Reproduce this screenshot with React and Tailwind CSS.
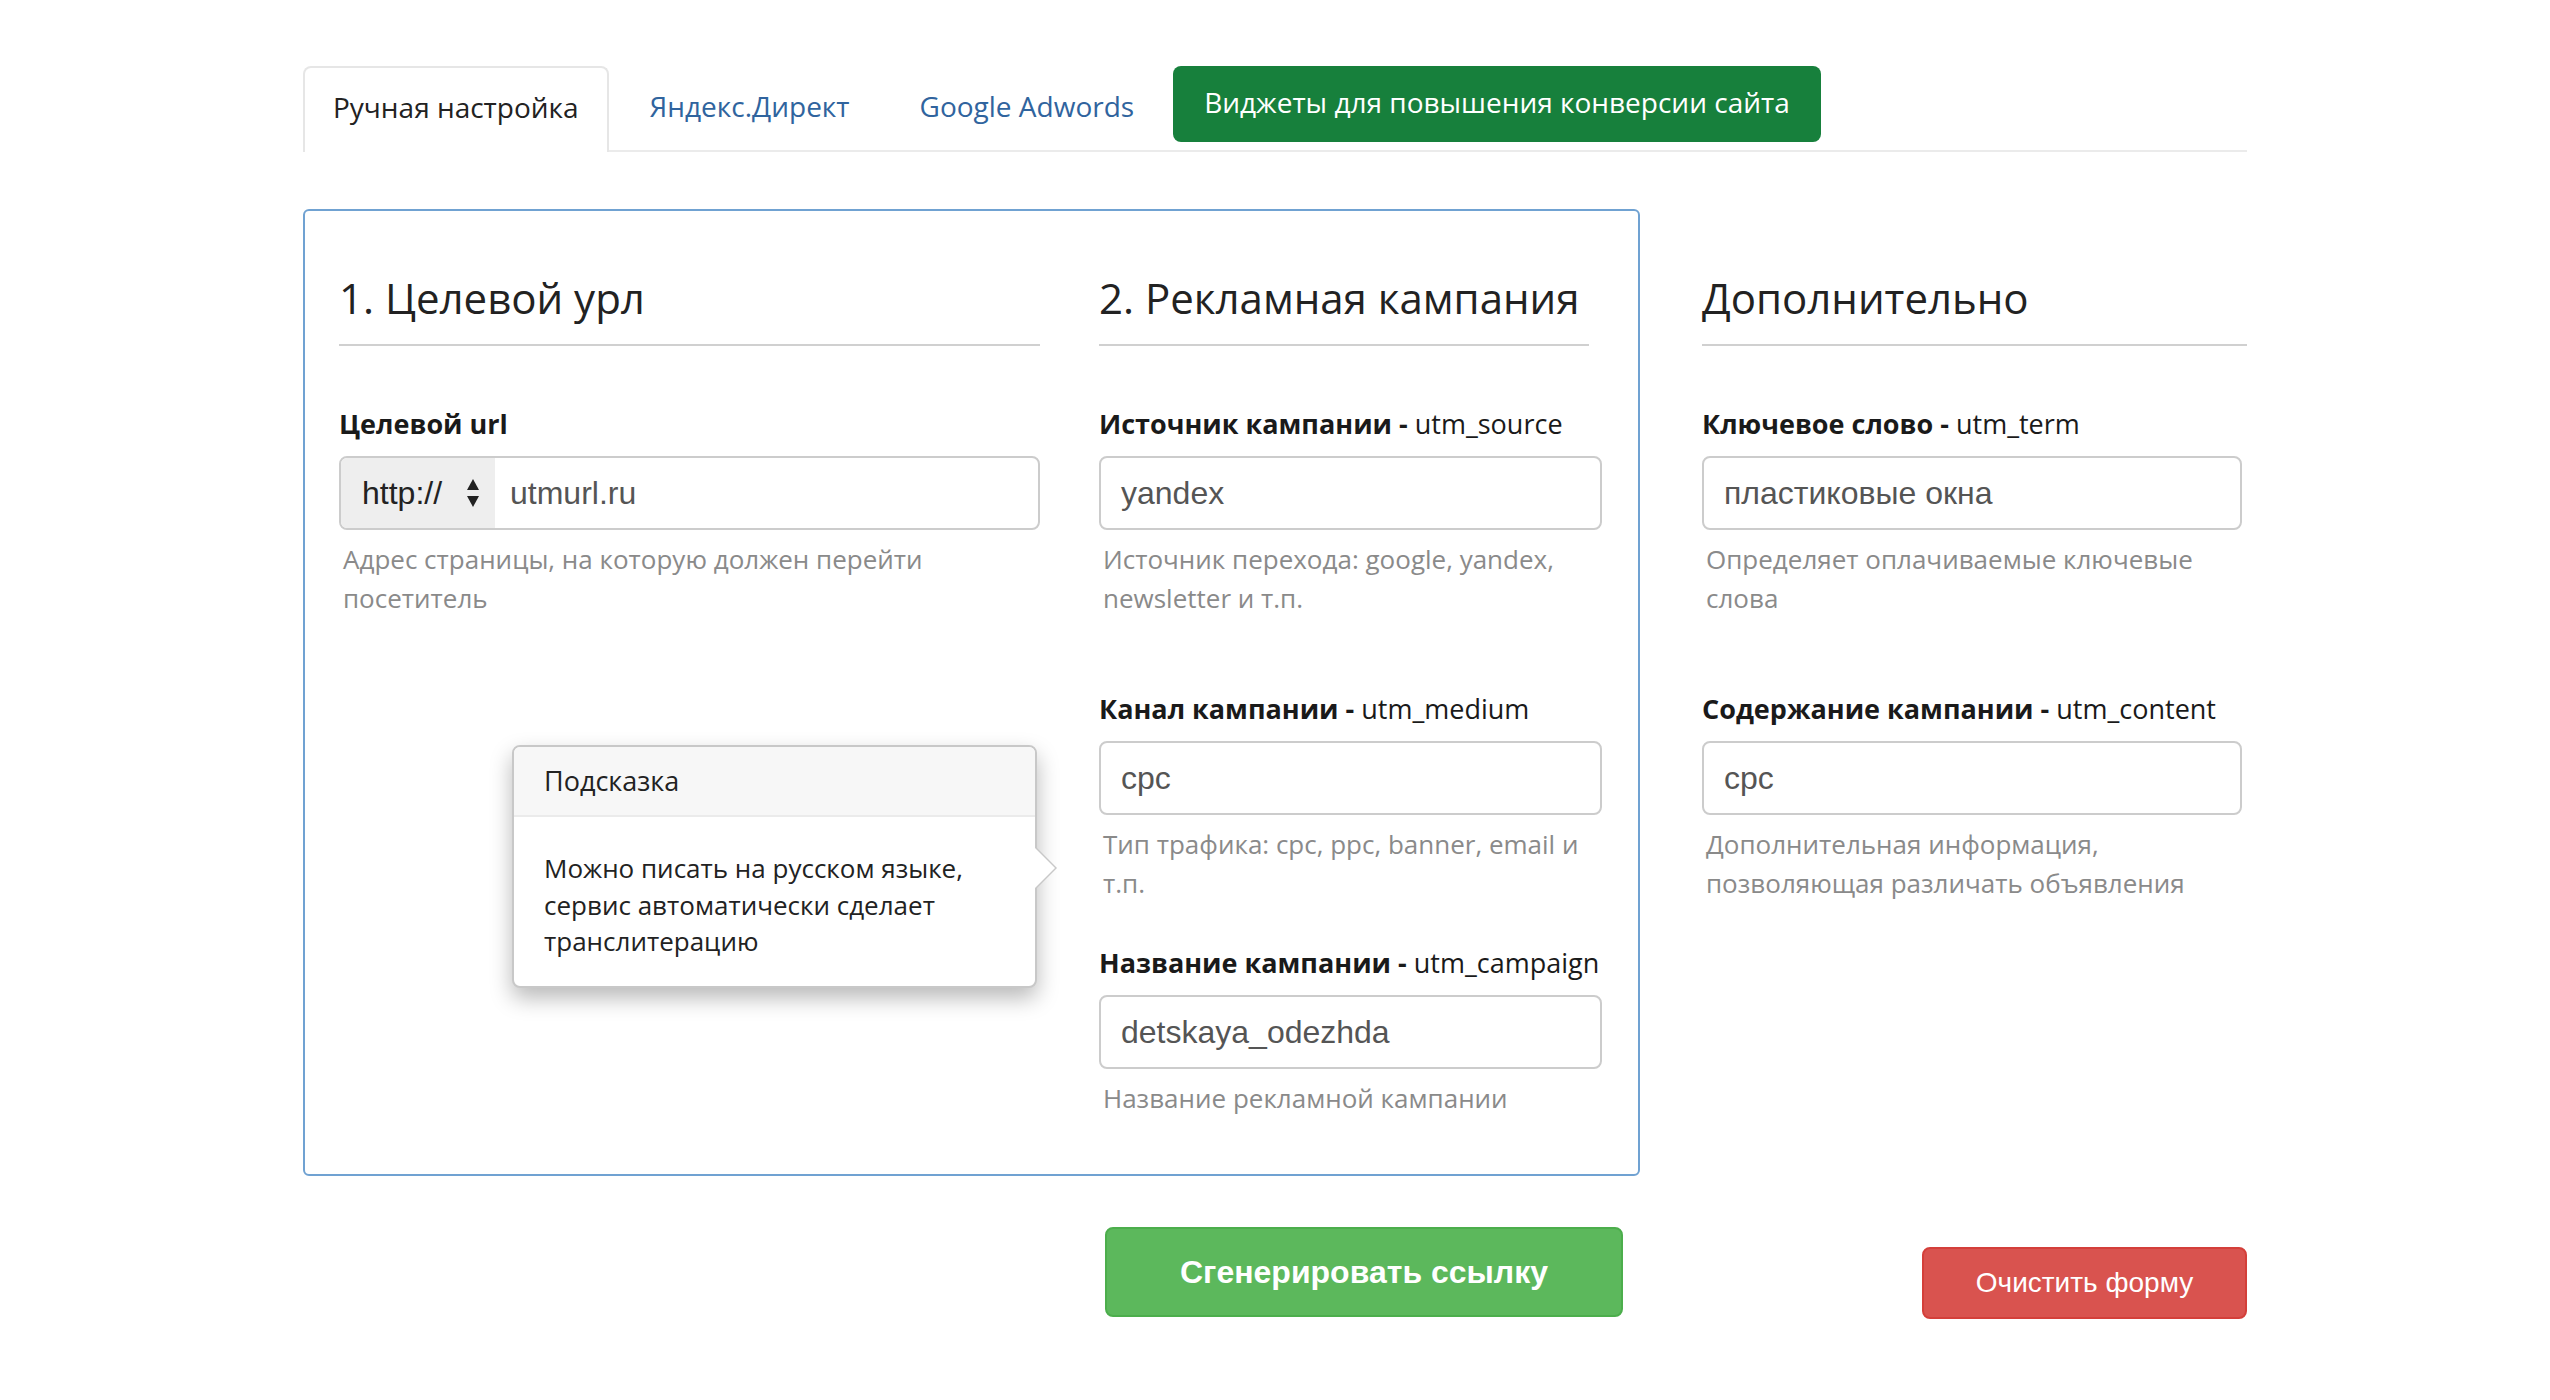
import React from "react";

const sans = "font-['Open_Sans',sans-serif]";
const arial = "font-['Liberation_Sans',Arial,sans-serif]";

const Label = ({ bold, rest }) => (
  <p className="text-[27px] leading-[36px] text-[#1a1a1a]">
    <span className="font-bold">{bold}</span>
    {rest}
  </p>
);

const Field = ({ bold, rest, value, help, className = "" }) => (
  <div className={className}>
    <Label bold={bold} rest={rest} />
    <div
      className={`mt-[14px] h-[74px] border-2 border-[#cccccc] rounded-[8px] flex items-center px-[20px] text-[32px] text-[#555] ${arial}`}
    >
      {value}
    </div>
    <p className="mt-[10px] text-[26px] leading-[39px] text-[#8a8a8a] pl-[4px]">
      {help}
    </p>
  </div>
);

const Heading = ({ children, lineClass = "w-full" }) => (
  <div>
    <h3 className="text-[42px] leading-[56px] text-[#222]">{children}</h3>
    <div className={`mt-[18px] border-b-2 border-[#d0d0d0] ${lineClass}`} />
  </div>
);

export default function App() {
  return (
    <div className={`min-h-[1400px] bg-white ${sans}`}>
      <div className="w-[1944px] mx-auto pt-[66px]">
        {/* tabs */}
        <div className="flex items-start h-[86px] border-b-2 border-[#ebebeb]">
          <div className="h-[86px] px-[28px] pb-[6px] flex items-center border-2 border-b-0 border-[#e6e6e6] rounded-t-[8px] bg-white text-[28px] text-[#222]">
            Ручная настройка
          </div>
          <div className="h-[86px] pl-[41px] pr-[35px] pb-[6px] flex items-center text-[28px] text-[#30649e]">
            Яндекс.Директ
          </div>
          <div className="h-[86px] pl-[35px] pr-[39px] pb-[6px] flex items-center text-[28px] text-[#30649e]">
            Google Adwords
          </div>
          <div className="h-[76px] px-[31px] pb-[4px] flex items-center rounded-[8px] bg-[#17803c] text-[28px] text-white">
            Виджеты для повышения конверсии сайта
          </div>
        </div>

        {/* main */}
        <div className="mt-[57px] flex items-start">
          <div className="relative w-[1337px] border-2 border-[#70a2d2] rounded-[6px] pl-[34px] pr-[36px] pt-[59px] pb-[56px] flex gap-[59px]">
            <div className="w-[701px]">
              <Heading>1. Целевой урл</Heading>
              <div className="mt-[60px]">
                <Label bold="Целевой url" rest="" />
                <div className="mt-[14px] h-[74px] border-2 border-[#cccccc] rounded-[8px] flex overflow-hidden">
                  <div className={`w-[154px] bg-[#eeeeee] flex items-center pl-[21px] text-[32px] text-[#222] ${arial}`}>
                    <span>http://</span>
                    <svg className="ml-[24px]" width="14" height="32" viewBox="0 0 14 32">
                      <path d="M7 2 L13 13 L1 13 Z" fill="#222" />
                      <path d="M7 30 L13 19 L1 19 Z" fill="#222" />
                    </svg>
                  </div>
                  <div className={`flex items-center pl-[15px] text-[32px] text-[#555] ${arial}`}>
                    utmurl.ru
                  </div>
                </div>
                <p className="mt-[10px] text-[26px] leading-[39px] text-[#8a8a8a] pl-[4px] w-[620px]">
                  Адрес страницы, на которую должен перейти посетитель
                </p>
              </div>
            </div>

            <div className="w-[503px]">
              <Heading lineClass="w-[490px]">2. Рекламная кампания</Heading>
              <Field
                className="mt-[60px]"
                bold="Источник кампании -"
                rest=" utm_source"
                value="yandex"
                help="Источник перехода: google, yandex, newsletter и т.п."
              />
              <Field
                className="mt-[73px]"
                bold="Канал кампании -"
                rest=" utm_medium"
                value="cpc"
                help="Тип трафика: cpc, ppc, banner, email и т.п."
              />
              <Field
                className="mt-[42px]"
                bold="Название кампании -"
                rest=" utm_campaign"
                value="detskaya_odezhda"
                help="Название рекламной кампании"
              />
            </div>

            {/* popover */}
            <div className="absolute left-[207px] top-[534px] w-[525px] h-[243px] bg-white border-2 border-[#c8c8c8] rounded-[8px] shadow-[0_10px_22px_rgba(0,0,0,0.28)]">
              <div className="h-[70px] bg-[#f7f7f7] border-b-2 border-[#ebebeb] rounded-t-[6px] flex items-center pl-[30px] text-[27px] text-[#222]">
                Подсказка
              </div>
              <p className="pt-[33px] pl-[30px] pr-[20px] text-[26px] leading-[36.5px] text-[#222]">
                Можно писать на русском языке, сервис автоматически сделает транслитерацию
              </p>
              <div className="absolute -right-[22px] top-[99px] w-0 h-0 border-y-[22px] border-y-transparent border-l-[22px] border-l-[#c8c8c8]" />
              <div className="absolute -right-[20px] top-[101px] w-0 h-0 border-y-[20px] border-y-transparent border-l-[20px] border-l-white" />
            </div>
          </div>

          <div className="ml-[62px] w-[545px] pt-[61px]">
            <Heading>Дополнительно</Heading>
            <div className="pr-[5px]">
              <Field
                className="mt-[60px]"
                bold="Ключевое слово -"
                rest=" utm_term"
                value="пластиковые окна"
                help="Определяет оплачиваемые ключевые слова"
              />
              <Field
                className="mt-[73px]"
                bold="Содержание кампании -"
                rest=" utm_content"
                value="cpc"
                help="Дополнительная информация, позволяющая различать объявления"
              />
            </div>
          </div>
        </div>

        {/* buttons */}
        <div className="mt-[51px] flex items-start">
          <button className={`ml-[802px] w-[518px] h-[90px] rounded-[8px] bg-[#5cb85c] border-2 border-[#4cae4c] text-white text-[32px] font-bold ${arial}`}>
            Сгенерировать ссылку
          </button>
          <button className={`ml-auto mt-[20px] w-[325px] h-[72px] rounded-[8px] bg-[#d9534f] border-2 border-[#d43f3a] text-white text-[28px] ${arial}`}>
            Очистить форму
          </button>
        </div>
      </div>
    </div>
  );
}
